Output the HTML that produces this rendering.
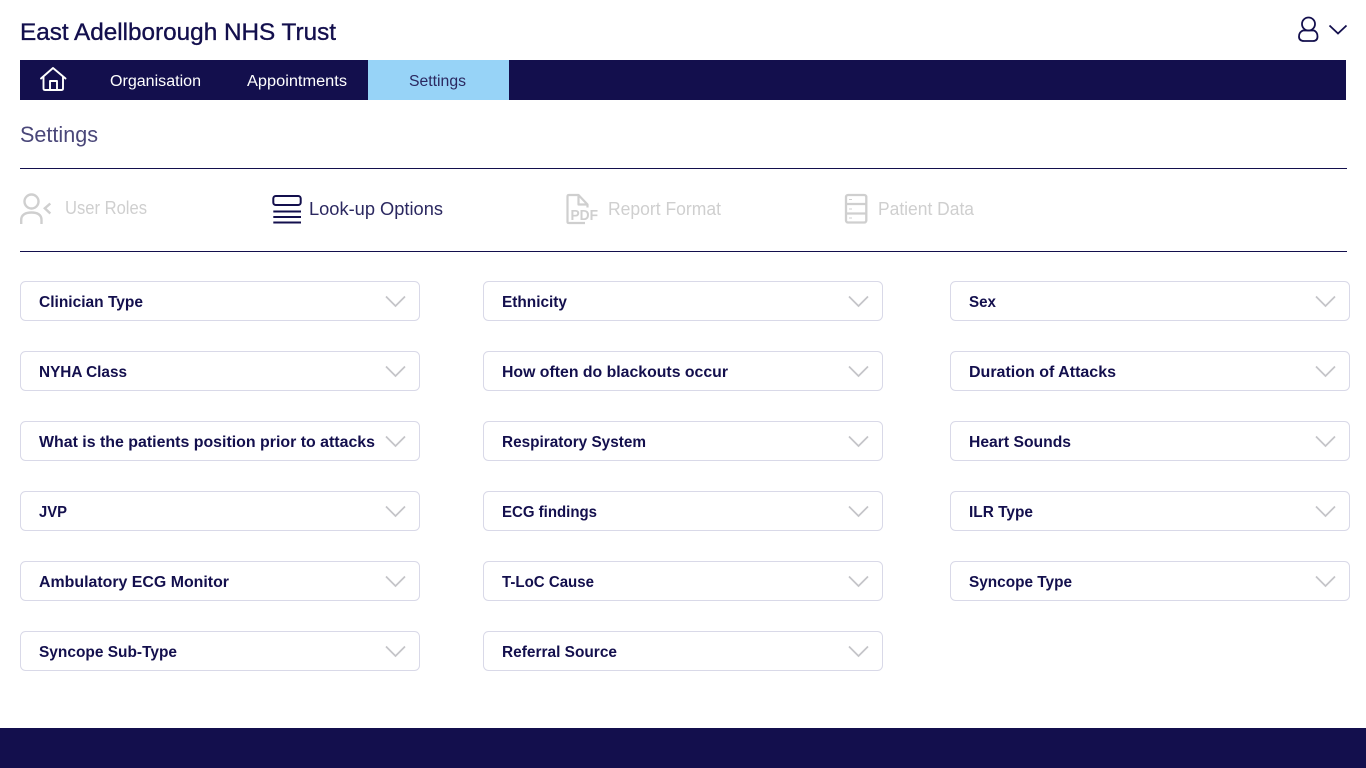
<!DOCTYPE html>
<html lang="en"><head><meta charset="utf-8"><title>Settings</title>
<style>
html,body{margin:0;padding:0;background:#fff;overflow:hidden}
svg{display:block}
text{font-family:"Liberation Sans",sans-serif}
.b{font-weight:700;font-size:15.5px;fill:#130f4d}
.box{fill:#fff;stroke:#d9d9e8;stroke-width:1}
.chev{fill:none;stroke:#c4c4c8;stroke-width:1.7}
.g{fill:#cfcfcf;font-size:18px}
</style></head><body>
<svg width="1366" height="768" viewBox="0 0 1366 768" xmlns="http://www.w3.org/2000/svg">
<rect width="1366" height="768" fill="#fff"/>
<text x="20" y="40" font-size="24" fill="#130f4d" stroke="#130f4d" stroke-width="0.35" textLength="316" lengthAdjust="spacingAndGlyphs">East Adellborough NHS Trust</text>
<g fill="none" stroke="#130f4d" stroke-width="1.8"><circle cx="1308.500" cy="24" r="6.500"/><path d="M1303 30.500H1314Q1317.500 32 1317.500 36.500Q1317.500 41 1313 41H1304Q1299 41 1299 36.500Q1299 32 1303 30.500Z"/><path d="M1329.500 25.500l8.500 8 8.500-8"/></g>
<rect x="20" y="60" width="1326" height="40" fill="#130f4d"/>
<rect x="368" y="60" width="141" height="40" fill="#97d3f7"/>
<path d="M41 78.500L53 68 65.500 78.500M43.500 76.500V88.500Q43.500 90 45 90H61.500Q63 90 63 88.500V76.500M50 90V81H57V90" fill="none" stroke="#fff" stroke-width="1.900" stroke-linejoin="round" stroke-linecap="round"/>
<text x="110" y="86" font-size="15.500" fill="#fff" textLength="91" lengthAdjust="spacingAndGlyphs">Organisation</text>
<text x="247" y="86" font-size="15.500" fill="#fff" textLength="100" lengthAdjust="spacingAndGlyphs">Appointments</text>
<text x="409" y="86" font-size="15.500" fill="#2b2860" textLength="57" lengthAdjust="spacingAndGlyphs">Settings</text>
<text x="20" y="142" font-size="22" fill="#4a4779" textLength="78" lengthAdjust="spacingAndGlyphs">Settings</text>
<rect x="20" y="168" width="1327" height="1" fill="#130f4d"/>
<rect x="20" y="251" width="1327" height="1" fill="#130f4d"/>
<g fill="none" stroke="#cfcfcf" stroke-width="2.400"><circle cx="31.500" cy="201.500" r="7"/><path d="M21.200 224V220C21.200 214.500 26 212.500 31.500 212.500S41.500 214.500 41.500 220V224"/><path d="M50.300 203.500L44.800 208.300 50.300 213.500"/></g>
<text class="g" x="65" y="214" textLength="82" lengthAdjust="spacingAndGlyphs">User Roles</text>
<g fill="none" stroke="#130f4d"><rect x="273.300" y="196" width="27.400" height="9" rx="2.500" stroke-width="2"/><path d="M273.300 211.500H301M273.300 217H301M273.300 222.500H301" stroke-width="1.900"/></g>
<text x="309" y="215" font-size="18" fill="#2b2860" textLength="134" lengthAdjust="spacingAndGlyphs">Look-up Options</text>
<g fill="none" stroke="#cfcfcf" stroke-width="2.200" stroke-linejoin="round"><path d="M567.500 222V196.500Q567.500 195 569 195H578.500L587.500 204.500V207.500M578.500 195V204.500H587.500M567.500 222Q567.500 223 569 223H585"/></g>
<text x="570.500" y="220" font-size="15" font-weight="700" fill="#cfcfcf" textLength="27.500" lengthAdjust="spacingAndGlyphs">PDF</text>
<text class="g" x="608" y="215" textLength="113" lengthAdjust="spacingAndGlyphs">Report Format</text>
<g fill="none" stroke="#cfcfcf" stroke-width="2.300"><rect x="846" y="195" width="20.300" height="27.500" rx="2"/><path d="M846 204H866M846 213.500H866"/></g>
<path d="M849 199.500h3M849 209h3M849 218h3" stroke="#cfcfcf" stroke-width="1"/>
<text class="g" x="878" y="215" textLength="96" lengthAdjust="spacingAndGlyphs">Patient Data</text>

<g>
<rect class="box" x="20.500" y="281.500" width="399" height="39" rx="5"/><path class="chev" d="M386 296.500l9.500 9.500 9.500-9.500"/><text class="b" x="39" y="307" textLength="104" lengthAdjust="spacingAndGlyphs">Clinician Type</text>
<rect class="box" x="20.500" y="351.500" width="399" height="39" rx="5"/><path class="chev" d="M386 366.500l9.500 9.500 9.500-9.500"/><text class="b" x="39" y="377" textLength="88" lengthAdjust="spacingAndGlyphs">NYHA Class</text>
<rect class="box" x="20.500" y="421.500" width="399" height="39" rx="5"/><path class="chev" d="M386 436.500l9.500 9.500 9.500-9.500"/><text class="b" x="39" y="447" textLength="336" lengthAdjust="spacingAndGlyphs">What is the patients position prior to attacks</text>
<rect class="box" x="20.500" y="491.500" width="399" height="39" rx="5"/><path class="chev" d="M386 506.500l9.500 9.500 9.500-9.500"/><text class="b" x="39" y="517" textLength="28" lengthAdjust="spacingAndGlyphs">JVP</text>
<rect class="box" x="20.500" y="561.500" width="399" height="39" rx="5"/><path class="chev" d="M386 576.500l9.500 9.500 9.500-9.500"/><text class="b" x="39" y="587" textLength="190" lengthAdjust="spacingAndGlyphs">Ambulatory ECG Monitor</text>
<rect class="box" x="20.500" y="631.500" width="399" height="39" rx="5"/><path class="chev" d="M386 646.500l9.500 9.500 9.500-9.500"/><text class="b" x="39" y="657" textLength="138" lengthAdjust="spacingAndGlyphs">Syncope Sub-Type</text>

<rect class="box" x="483.500" y="281.500" width="399" height="39" rx="5"/><path class="chev" d="M849 296.500l9.500 9.500 9.500-9.500"/><text class="b" x="502" y="307" textLength="65" lengthAdjust="spacingAndGlyphs">Ethnicity</text>
<rect class="box" x="483.500" y="351.500" width="399" height="39" rx="5"/><path class="chev" d="M849 366.500l9.500 9.500 9.500-9.500"/><text class="b" x="502" y="377" textLength="226" lengthAdjust="spacingAndGlyphs">How often do blackouts occur</text>
<rect class="box" x="483.500" y="421.500" width="399" height="39" rx="5"/><path class="chev" d="M849 436.500l9.500 9.500 9.500-9.500"/><text class="b" x="502" y="447" textLength="144" lengthAdjust="spacingAndGlyphs">Respiratory System</text>
<rect class="box" x="483.500" y="491.500" width="399" height="39" rx="5"/><path class="chev" d="M849 506.500l9.500 9.500 9.500-9.500"/><text class="b" x="502" y="517" textLength="95" lengthAdjust="spacingAndGlyphs">ECG findings</text>
<rect class="box" x="483.500" y="561.500" width="399" height="39" rx="5"/><path class="chev" d="M849 576.500l9.500 9.500 9.500-9.500"/><text class="b" x="502" y="587" textLength="92" lengthAdjust="spacingAndGlyphs">T-LoC Cause</text>
<rect class="box" x="483.500" y="631.500" width="399" height="39" rx="5"/><path class="chev" d="M849 646.500l9.500 9.500 9.500-9.500"/><text class="b" x="502" y="657" textLength="115" lengthAdjust="spacingAndGlyphs">Referral Source</text>

<rect class="box" x="950.500" y="281.500" width="399" height="39" rx="5"/><path class="chev" d="M1316 296.500l9.500 9.500 9.500-9.500"/><text class="b" x="969" y="307" textLength="27" lengthAdjust="spacingAndGlyphs">Sex</text>
<rect class="box" x="950.500" y="351.500" width="399" height="39" rx="5"/><path class="chev" d="M1316 366.500l9.500 9.500 9.500-9.500"/><text class="b" x="969" y="377" textLength="147" lengthAdjust="spacingAndGlyphs">Duration of Attacks</text>
<rect class="box" x="950.500" y="421.500" width="399" height="39" rx="5"/><path class="chev" d="M1316 436.500l9.500 9.500 9.500-9.500"/><text class="b" x="969" y="447" textLength="102" lengthAdjust="spacingAndGlyphs">Heart Sounds</text>
<rect class="box" x="950.500" y="491.500" width="399" height="39" rx="5"/><path class="chev" d="M1316 506.500l9.500 9.500 9.500-9.500"/><text class="b" x="969" y="517" textLength="64" lengthAdjust="spacingAndGlyphs">ILR Type</text>
<rect class="box" x="950.500" y="561.500" width="399" height="39" rx="5"/><path class="chev" d="M1316 576.500l9.500 9.500 9.500-9.500"/><text class="b" x="969" y="587" textLength="103" lengthAdjust="spacingAndGlyphs">Syncope Type</text>
</g>
<rect x="0" y="728" width="1366" height="40" fill="#130f4d"/>
</svg>
</body></html>
